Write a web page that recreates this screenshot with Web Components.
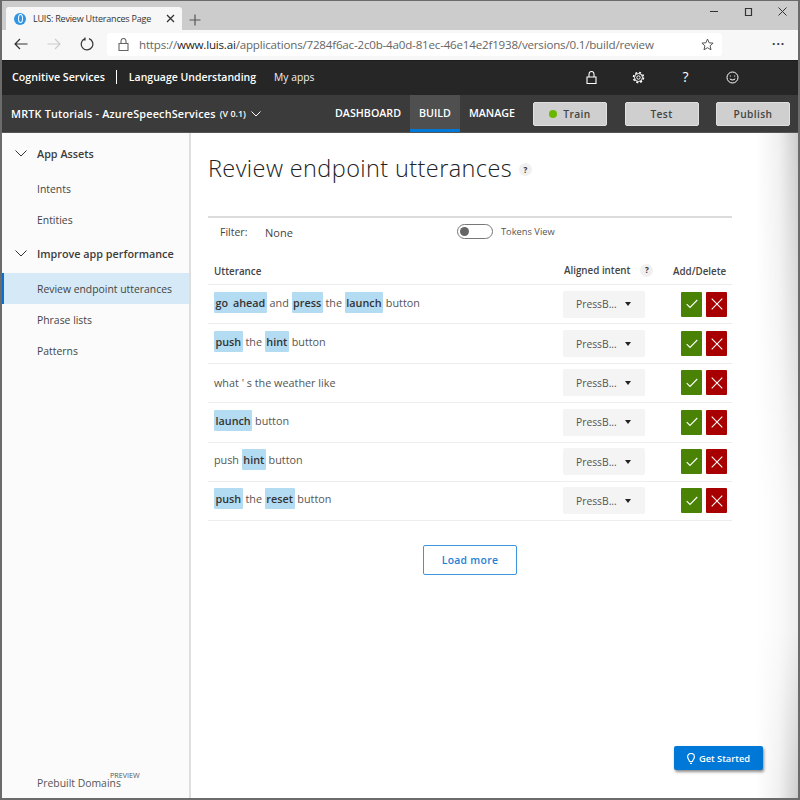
<!DOCTYPE html>
<html>
<head>
<meta charset="utf-8">
<title>LUIS: Review Utterances Page</title>
<style>
  html, body { margin: 0; padding: 0; width: 800px; height: 800px; overflow: hidden; background: #fff; }
  body { font-family: "Open Sans", "Noto Sans", sans-serif; }
</style>
</head>
<body>
<luis-window>
  <browser-chrome></browser-chrome>
  <top-nav></top-nav>
  <app-bar></app-bar>
  <div style="display:flex;flex:1;min-height:0">
    <side-nav></side-nav>
    <review-page>
      <utterance-row html="<b>go ahead</b> and <b>press</b> the <b>launch</b> button"></utterance-row>
      <utterance-row html="<b>push</b> the <b>hint</b> button"></utterance-row>
      <utterance-row html="what ' s the weather like"></utterance-row>
      <utterance-row html="<b>launch</b> button"></utterance-row>
      <utterance-row html="push <b>hint</b> button"></utterance-row>
      <utterance-row html="<b>push</b> the <b>reset</b> button"></utterance-row>
    </review-page>
  </div>
</luis-window>
<script>
(function () {
  "use strict";

  function define(name, css, html, setup) {
    customElements.define(name, class extends HTMLElement {
      constructor() {
        super();
        this.attachShadow({ mode: "open" });
      }
      connectedCallback() {
        this.shadowRoot.innerHTML = "<style>" + css + "</style>" + html;
        if (setup) setup(this);
      }
    });
  }

  var stroke = 'fill="none" stroke="currentColor"';

  define("luis-window",
    ":host{display:flex;flex-direction:column;box-sizing:border-box;width:800px;height:800px;border:solid #6b6b6b;border-width:1px 2px 2px 2px;background:#fff}",
    "<slot></slot>");

  define("browser-chrome",
    ":host{display:block;flex:none;font-family:'Open Sans',sans-serif;color:#333}" +
    ".strip{height:29px;background:#ccc;display:flex;align-items:flex-end;padding-left:4px}" +
    ".tab{width:176px;height:23px;background:#f7f7f7;border-radius:3px 3px 0 0;display:flex;align-items:center;box-sizing:border-box;padding-left:8px;font-size:9px;color:#333;white-space:nowrap}" +
    ".fav{width:12px;height:12px;border-radius:50%;background:#2f96e6;margin-right:7px;flex:none;display:flex;align-items:center;justify-content:center}" +
    ".fav i{display:block;width:3px;height:7px;border:1px solid #fff;border-radius:50%}" +
    ".ttl{flex:1;letter-spacing:-.2px}.x{margin-right:7px;display:flex}" +
    ".plus{margin-left:7px;margin-bottom:4px;display:flex;color:#555}" +
    ".caps{margin-left:auto;display:flex;align-self:flex-start;margin-top:4px;margin-right:-1px;color:#333}" +
    ".caps span{width:34px;display:flex;justify-content:center}" +
    ".bar{height:30px;background:#f7f7f7;display:flex;align-items:center;box-sizing:border-box;padding-bottom:2px}" +
    ".nav{display:flex;align-items:center;width:105px;flex:none;padding-left:2px;box-sizing:border-box}" +
    ".nav span{display:flex;width:33px;justify-content:center}" +
    ".addr{width:615px;height:23px;background:#fff;border-radius:3px;display:flex;align-items:center;flex:none;font-size:11.6px;color:#666;letter-spacing:-.2px;white-space:nowrap}" +
    ".lock{margin:0 10px 0 11px;display:flex;color:#666}.addr b{font-weight:400;color:#222}" +
    ".star{margin-left:auto;margin-right:8px;display:flex;color:#555}" +
    ".more{margin-left:50px;font-size:12px;letter-spacing:1px;font-weight:700;line-height:10px;color:#333}",
    '<div class="strip"><div class="tab"><span class="fav"><i></i></span><span class="ttl">LUIS: Review Utterances Page</span>' +
    '<span class="x"><svg width="9" height="9" viewBox="0 0 9 9" ' + stroke + ' stroke-width="1.3"><path d="M1 1l7 7M8 1l-7 7"/></svg></span></div>' +
    '<span class="plus"><svg width="12" height="12" viewBox="0 0 12 12" ' + stroke + ' stroke-width="1.2"><path d="M6 .5v11M.5 6h11"/></svg></span>' +
    '<span class="caps"><span><svg width="10" height="14" viewBox="0 0 10 14" ' + stroke + '><path d="M1 6.5h8"/></svg></span>' +
    '<span><svg width="11" height="14" viewBox="0 0 11 14" ' + stroke + '><path d="M2.5 3.5h6v7h-6z" stroke-width="1.2"/></svg></span>' +
    '<span><svg width="11" height="14" viewBox="0 0 11 14" ' + stroke + '><path d="M1.5 2.5l8 8M9.5 2.5l-8 8"/></svg></span></span></div>' +
    '<div class="bar"><div class="nav">' +
    '<span><svg width="14" height="12" viewBox="0 0 14 12" ' + stroke + ' stroke-width="1.2" style="color:#333"><path d="M13.5 6H1M6 1L1 6l5 5"/></svg></span>' +
    '<span><svg width="14" height="12" viewBox="0 0 14 12" ' + stroke + ' stroke-width="1.2" style="color:#ccc"><path d="M.5 6H13M8 1l5 5-5 5"/></svg></span>' +
    '<span><svg width="14" height="14" viewBox="0 0 14 14" ' + stroke + ' stroke-width="1.2" style="color:#333"><path d="M9 1.6A5.8 5.8 0 1 1 4.6 1.8M5 .4v2.6H2.2"/></svg></span></div>' +
    '<div class="addr"><span class="lock"><svg width="11" height="13" viewBox="0 0 11 13" ' + stroke + ' stroke-width="1.1"><path d="M1 5.5h9v7H1zM3 5.5V3a2.5 2.5 0 0 1 5 0v2.5"/></svg></span>https://<b>www.luis.ai</b>/applications/7284f6ac-2c0b-4a0d-81ec-46e14e2f1938/versions/0.1/build/review' +
    '<span class="star"><svg width="13" height="13" viewBox="0 0 13 13" ' + stroke + '><path d="M6.5 1l1.6 3.8 4 .3-3 2.7.9 4-3.5-2.1L3 11.8l.9-4-3-2.7 4-.3z"/></svg></span></div>' +
    '<span class="more">\u00b7\u00b7\u00b7</span></div>');

  define("top-nav",
    ":host{display:flex;flex:none;height:35px;background:#262626;color:#fff;align-items:center;font-size:10.7px;font-family:'Open Sans',sans-serif;box-sizing:border-box;padding:0 0 2px 10px;border-top:1px solid #1c1c1c;white-space:nowrap}" +
    ".sep{width:1px;height:14px;background:#fff;margin:0 12px 0 11px}.sub{margin-left:18px;font-size:10.3px;color:#f0f0f0}" +
    ".name{font-weight:600}" +
    ".icons{margin-left:auto;display:flex;align-items:center;margin-right:42px}" +
    ".icons span{width:47px;display:flex;justify-content:center;align-items:center}",
    '<span class="name">Cognitive Services</span><i class="sep"></i><span class="name" style="font-size:10.5px">Language Understanding</span><span class="sub">My apps</span>' +
    '<div class="icons">' +
    '<span><svg width="11" height="13" viewBox="0 0 11 13" ' + stroke + ' stroke-width="1.1"><path d="M1 6h9v6.5H1zM3 6V3a2.5 2.5 0 0 1 5 0v3"/></svg></span>' +
    '<span><svg width="13" height="13" viewBox="0 0 13 13" ' + stroke + '><circle cx="6.5" cy="6.5" r="1.7"/><circle cx="6.5" cy="6.5" r="4"/><circle cx="6.5" cy="6.5" r="5" stroke-width="1.5" stroke-dasharray="2 1.93"/></svg></span>' +
    '<span style="font-size:14px;line-height:14px">?</span>' +
    '<span><svg width="13" height="13" viewBox="0 0 13 13" ' + stroke + '><circle cx="6.5" cy="6.5" r="5.5"/><path d="M3.8 7.8c1.3 1.5 4.1 1.5 5.4 0M4.3 4.5v1M8.7 4.5v1"/></svg></span></div>');

  define("app-bar",
    ":host{display:flex;flex:none;height:38px;background:#3b3b3b;color:#fff;align-items:center;font-family:'Open Sans',sans-serif;box-sizing:border-box;padding-left:9px;border-bottom:1px solid #555;white-space:nowrap}" +
    ".name{font-size:10.8px;font-weight:600;letter-spacing:.2px}.ver{font-size:8.9px;font-weight:600;margin-left:4px}" +
    ".chev{margin-left:5px;display:flex}" +
    ".tabs{margin-left:auto;display:flex;height:100%;font-size:10.7px;font-weight:600}" +
    ".tabs span{display:flex;align-items:center;padding:0 9px;box-sizing:border-box;border-bottom:3px solid transparent;border-top:2px solid transparent}" +
    ".tabs .on{background:#4f4f4f;border-bottom-color:#0078d7}" +
    ".btns{display:flex;margin-right:8px;margin-left:9px;gap:17.5px}" +
    ".btn{width:74px;height:24px;box-sizing:border-box;background:#cfcfcf;border:1px solid #e0e0e0;border-radius:2px;color:#444;font-size:10.2px;font-weight:600;letter-spacing:.4px;display:flex;align-items:center;justify-content:center}" +
    ".dot{width:8px;height:8px;background:#6bb700;border-radius:50%;margin-right:6px}",
    '<span class="name">MRTK Tutorials - AzureSpeechServices</span><span class="ver">(V 0.1)</span>' +
    '<span class="chev"><svg width="10" height="6" viewBox="0 0 10 6" ' + stroke + '><path d="M.5.5L5 5 9.5.5"/></svg></span>' +
    '<div class="tabs"><span>DASHBOARD</span><span class="on">BUILD</span><span>MANAGE</span></div>' +
    '<div class="btns"><div class="btn"><i class="dot"></i>Train</div><div class="btn">Test</div><div class="btn">Publish</div></div>');

  var chevron = '<svg width="12" height="7" viewBox="0 0 12 7" ' + stroke + '><path d="M.5.5L6 6 11.5.5"/></svg>';
  define("side-nav",
    ":host{display:flex;flex-direction:column;flex:none;box-sizing:border-box;width:189px;background:#fbfbfb;border-right:2px solid #dedede;font-family:'Open Sans',sans-serif;font-size:10.4px;color:#444;padding-top:2px;padding-bottom:6px}" +
    ".head,.item{height:31px;display:flex;align-items:center;padding-left:35px;box-sizing:border-box;white-space:nowrap}" +
    ".head{height:38px;padding-bottom:2px;position:relative;font-weight:600;font-size:10.8px;color:#3c3c3c}.head svg{position:absolute;left:13px;top:15px;color:#333}" +
    ".item.on{background:#d6e9f6;border-left:2px solid #0a6fd0;padding-left:33px}" +
    ".foot{margin-top:auto;padding-left:35px;position:relative;height:18px;line-height:18px;color:#555}" +
    ".foot small{position:absolute;left:108px;top:-4px;font-size:7.2px;line-height:10px}",
    '<div class="head">' + chevron + 'App Assets</div><div class="item">Intents</div><div class="item">Entities</div>' +
    '<div class="head">' + chevron + 'Improve app performance</div><div class="item on">Review endpoint utterances</div>' +
    '<div class="item">Phrase lists</div><div class="item">Patterns</div>' +
    '<div class="foot">Prebuilt Domains<small>PREVIEW</small></div>');

  define("help-dot",
    ":host{display:inline-flex;width:13px;height:13px;border-radius:50%;background:#f0f0f0;color:#333;font-size:8px;font-weight:700;align-items:center;justify-content:center;line-height:1}",
    "?");

  define("review-page",
    ":host{display:block;flex:1;position:relative;box-sizing:border-box;padding:0 66px 0 17px;font-family:'Open Sans',sans-serif;color:#333}" +
    ":host::after{content:'';position:absolute;top:0;right:0;bottom:0;width:42px;pointer-events:none;background:linear-gradient(to right,rgba(0,0,0,0),rgba(0,0,0,.06) 55%,rgba(0,0,0,.2));-webkit-mask-image:linear-gradient(to bottom,#000,rgba(0,0,0,.35) 55%,rgba(0,0,0,.35) 75%,#000);mask-image:linear-gradient(to bottom,#000,rgba(0,0,0,.35) 55%,rgba(0,0,0,.35) 75%,#000)}" +
    "h1{font-weight:300;font-size:23.5px;line-height:32px;margin:19px 0 0;display:flex;align-items:center;color:#222;letter-spacing:.4px;white-space:nowrap}" +
    "h1 help-dot{margin-left:7px;margin-top:3px}" +
    ".filter{margin-top:32px;height:30px;border-top:2px solid #dcdcdc;display:flex;align-items:center;font-size:10.5px;color:#444}" +
    ".filter .l{margin-left:12px;width:45px;margin-top:-3px}.filter .n{width:192px;font-size:11px;margin-top:-2px}" +
    ".toggle{width:36px;height:15px;box-sizing:border-box;border:1.5px solid #777;border-radius:8px;display:flex;align-items:center;padding-left:2px;margin-right:8px;margin-top:-3px}" +
    ".toggle i{width:9px;height:9px;border-radius:50%;background:#666}" +
    ".tv{font-size:9.3px;color:#555;margin-top:-3px}" +
    ".cols{display:grid;grid-template-columns:350px 109px 1fr;align-items:center;height:36px;font-size:9.8px;font-weight:600;color:#444;padding:10px 0 0 6px;box-sizing:border-box}" +
    ".cols>:nth-child(2){display:flex;align-items:center;gap:10px;margin-top:-2px}" +
    ".more{display:block;margin:24px auto 0;width:94px;height:30px;box-sizing:border-box;border:1px solid #3f95e0;border-radius:2px;color:#1e7fd4;background:#fff;font:600 10.4px 'Open Sans',sans-serif;letter-spacing:.3px}" +
    ".start{position:absolute;left:483px;bottom:28px;width:89px;height:24px;background:#0078d7;border-radius:2px;box-shadow:1px 2px 3px rgba(0,0,0,.45);color:#fff;font-size:9.3px;font-weight:600;display:flex;align-items:center;justify-content:center;gap:4px}",
    '<h1>Review endpoint utterances<help-dot></help-dot></h1>' +
    '<div class="filter"><span class="l">Filter:</span><span class="n">None</span><span class="toggle"><i></i></span><span class="tv">Tokens View</span></div>' +
    '<div class="cols"><span>Utterance</span><span>Aligned intent<help-dot></help-dot></span><span>Add/Delete</span></div>' +
    '<slot></slot><button class="more">Load more</button>' +
    '<div class="start"><svg width="8" height="11" viewBox="0 0 8 11" fill="none" stroke="#fff" stroke-width="1.2"><path d="M2.5 8.5C2.5 6.8.6 6 .6 3.8a3.4 3.4 0 0 1 6.8 0C7.4 6 5.5 6.8 5.5 8.5zM3 10.3h2"/></svg>Get Started</div>');

  define("utterance-row",
    ":host{display:grid;grid-template-columns:355px 117px 1fr;align-items:center;height:39.4px;box-sizing:border-box;border-top:1px solid #ededed;padding-left:6px;font-size:10.8px;color:#555}" +
    ":host(:last-of-type){border-bottom:1px solid #ededed;height:40px}" +
    ".txt{white-space:pre-wrap}" +
    ".txt b{display:inline-block;background:#b3dbf2;border-radius:1px;color:#333;font-weight:600;padding:0 1.5px;line-height:21px;margin-bottom:4px;word-spacing:2px}" +
    ".sel{width:82px;height:27px;margin-left:-6px;background:#f4f4f4;border-radius:2px;display:flex;align-items:center;padding-left:13px;box-sizing:border-box;color:#555;font-size:10.3px}" +
    ".sel i{margin-left:8px;border:solid transparent;border-width:4px 3.5px 0;border-top-color:#222}" +
    ".act{display:flex;gap:4px;margin-left:-5px}" +
    ".act span{width:21px;height:25px;display:flex;align-items:center;justify-content:center;border-radius:1px}" +
    ".ok{background:#498205}.no{background:#a80000}",
    '<div class="txt"></div><div class="sel">PressB...<i></i></div>' +
    '<div class="act"><span class="ok"><svg width="12" height="10" viewBox="0 0 12 10" fill="none" stroke="#fff" stroke-width="1.1"><path d="M.7 5.2L4 8.5 11.3 1"/></svg></span>' +
    '<span class="no"><svg width="12" height="12" viewBox="0 0 12 12" fill="none" stroke="#fff" stroke-width="1.1"><path d="M.7.7l10.6 10.6M11.3.7L.7 11.3"/></svg></span></div>',
    function (el) {
      el.shadowRoot.querySelector(".txt").innerHTML = el.getAttribute("html");
    });
})();
</script>
</body>
</html>
